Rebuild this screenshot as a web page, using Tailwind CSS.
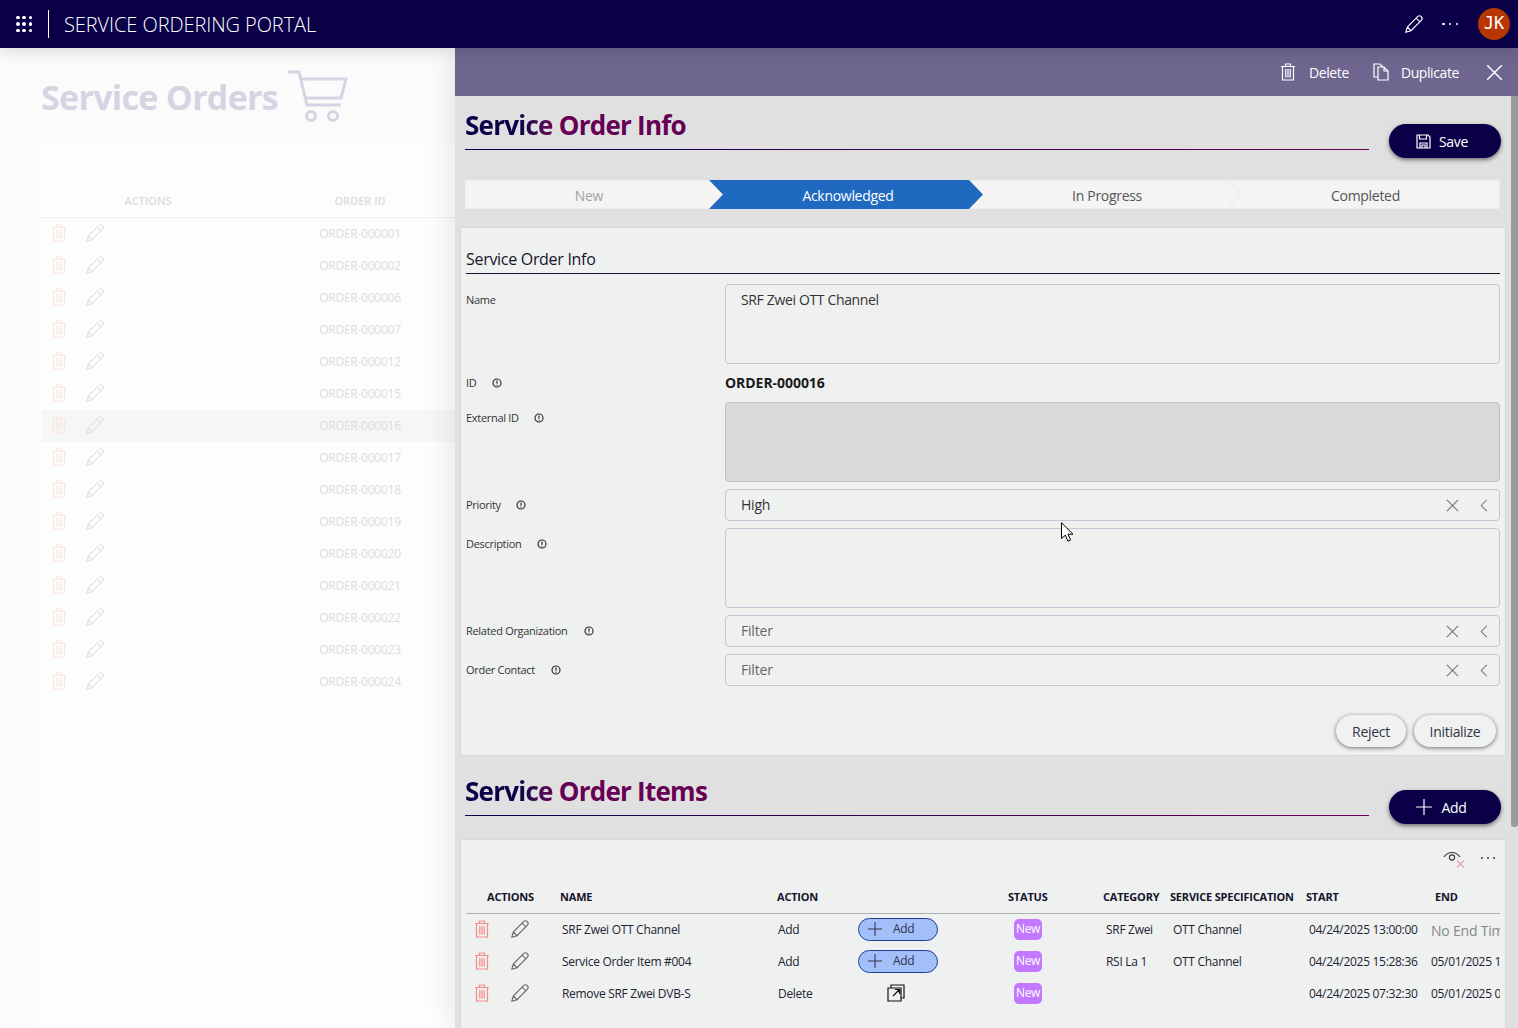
<!DOCTYPE html>
<html lang="en">
<head>
<meta charset="utf-8">
<title>Service Ordering Portal</title>
<script src="https://cdn.jsdelivr.net/npm/@tailwindcss/browser@4"></script>
</head>
<body class="font-['Open_Sans','Noto_Sans',sans-serif]">
<!-- shared icons -->
<svg class="hidden">
    <symbol id="trash" viewBox="0 0 14 18" fill="none" stroke="currentColor" stroke-width="1.2">
        <path d="M0 3.5h14M4.5 3.5V1h5v2.5M1.5 3.5V17h11V3.5M4.8 6v8.5M7 6v8.5M9.2 6v8.5" />
    </symbol>
    <symbol id="pencil" viewBox="0 0 18 18" fill="none" stroke="currentColor" stroke-width="1.1">
        <path d="M.8 17.2l1.5-5.2L12.6 1.7a2 2 0 0 1 3.7 3.7L6 15.7zM2.3 12L6 15.7M11.2 3.1l3.7 3.7M.8 17.2l3-1" />
    </symbol>
    <symbol id="info" viewBox="0 0 10 10" fill="none" stroke="currentColor" stroke-width="1.2">
        <circle cx="5" cy="5" r="4" />
        <path d="M5 2.6v3.2M5 6.8v.9" />
    </symbol>
    <symbol id="close" viewBox="0 0 14 14" fill="none" stroke="currentColor" stroke-width="1.2">
        <path d="M1 1l12 12M13 1L1 13" />
    </symbol>
    <symbol id="chevron" viewBox="0 0 8 14" fill="none" stroke="currentColor" stroke-width="1.1">
        <path d="M7 1L1 7l6 6" />
    </symbol>
    <symbol id="plus" viewBox="0 0 16 16" fill="none" stroke="currentColor" stroke-width="1.2">
        <path d="M8 0v16M0 8h16" />
    </symbol>
</svg>

<div class="relative w-[1518px] h-[1028px] overflow-hidden flex flex-col bg-[#fbfbfb]">
    <header class="relative z-20 h-12 shrink-0 bg-[#0a0048] text-white flex items-center shadow-[0_4px_14px_rgba(0,0,0,0.12)]">
        <div class="w-12 flex justify-center">
            <div class="grid grid-cols-3 gap-[3px] w-[16px]">
                <i class="size-[3.5px] rounded-full bg-white"></i><i class="size-[3.5px] rounded-full bg-white"></i><i class="size-[3.5px] rounded-full bg-white"></i>
                <i class="size-[3.5px] rounded-full bg-white"></i><i class="size-[3.5px] rounded-full bg-white"></i><i class="size-[3.5px] rounded-full bg-white"></i>
                <i class="size-[3.5px] rounded-full bg-white"></i><i class="size-[3.5px] rounded-full bg-white"></i><i class="size-[3.5px] rounded-full bg-white"></i>
            </div>
        </div>
        <div class="w-px h-7 bg-white"></div>
        <h1 class="ml-[15px] pt-[2px] text-[20px] font-light tracking-[-0.08px]">SERVICE ORDERING PORTAL</h1>
        <div class="ml-auto flex items-center">
            <svg class="size-[18px] text-white"><use href="#pencil" /></svg>
            <div class="ml-[19px] w-[16px] flex justify-between">
                <i class="size-[2.5px] bg-white rounded-full"></i><i class="size-[2.5px] bg-white rounded-full"></i><i class="size-[2.5px] bg-white rounded-full"></i>
            </div>
            <div class="ml-[20px] mr-2 size-8 rounded-full bg-[#b83600] flex items-center justify-center font-['DejaVu_Sans_Mono',monospace] text-[17px]">JK</div>
        </div>
    </header>

    <div class="flex flex-1 min-h-0">
        <!-- faded orders list behind the drawer -->
        <aside class="w-[455px] shrink-0 flex flex-col pl-[38px]">
            <div class="h-[96px] shrink-0 flex pl-[3px]">
                <h2 class="mt-[24px] text-[34px] leading-[50px] font-bold tracking-[-0.7px] text-[#d6d4e3]">Service Orders</h2>
                <svg class="ml-[10px] mt-[22px] w-[60px] h-[54px] text-[#d6d4e3]" viewBox="0 0 60 54" fill="none" stroke="currentColor" stroke-width="3">
                    <path d="M0 2h11l8 33h34M13 9h45l-5 19H18" />
                    <circle cx="23" cy="46" r="4.5" /><circle cx="45" cy="46" r="4.5" />
                </svg>
            </div>
            <div class="flex-1 bg-[#fdfdfd] pl-[4px]">
                <div class="h-[74px] flex items-end border-b border-[#eeeeee] text-[11px] font-semibold text-[#dcdcdc] pb-[8px]">
                    <span class="w-[212px] shrink-0 text-center">ACTIONS</span>
                    <span class="w-[212px] shrink-0 text-center">ORDER ID</span>
                </div>
                <div class="text-[12px] tracking-[-0.25px] text-[#dcdcdc]">
                    <div class="h-8 flex items-center"><svg class="ml-[10px] -mt-[2px] w-[14px] h-[18px] text-[#fde3e0]"><use href="#trash" /></svg><svg class="ml-[20px] -mt-[2px] size-[18px] text-[#e2e2e2]"><use href="#pencil" /></svg><span class="ml-[201px] w-[110px] text-center">ORDER-000001</span></div>
                    <div class="h-8 flex items-center"><svg class="ml-[10px] -mt-[2px] w-[14px] h-[18px] text-[#fde3e0]"><use href="#trash" /></svg><svg class="ml-[20px] -mt-[2px] size-[18px] text-[#e2e2e2]"><use href="#pencil" /></svg><span class="ml-[201px] w-[110px] text-center">ORDER-000002</span></div>
                    <div class="h-8 flex items-center"><svg class="ml-[10px] -mt-[2px] w-[14px] h-[18px] text-[#fde3e0]"><use href="#trash" /></svg><svg class="ml-[20px] -mt-[2px] size-[18px] text-[#e2e2e2]"><use href="#pencil" /></svg><span class="ml-[201px] w-[110px] text-center">ORDER-000006</span></div>
                    <div class="h-8 flex items-center"><svg class="ml-[10px] -mt-[2px] w-[14px] h-[18px] text-[#fde3e0]"><use href="#trash" /></svg><svg class="ml-[20px] -mt-[2px] size-[18px] text-[#e2e2e2]"><use href="#pencil" /></svg><span class="ml-[201px] w-[110px] text-center">ORDER-000007</span></div>
                    <div class="h-8 flex items-center"><svg class="ml-[10px] -mt-[2px] w-[14px] h-[18px] text-[#fde3e0]"><use href="#trash" /></svg><svg class="ml-[20px] -mt-[2px] size-[18px] text-[#e2e2e2]"><use href="#pencil" /></svg><span class="ml-[201px] w-[110px] text-center">ORDER-000012</span></div>
                    <div class="h-8 flex items-center"><svg class="ml-[10px] -mt-[2px] w-[14px] h-[18px] text-[#fde3e0]"><use href="#trash" /></svg><svg class="ml-[20px] -mt-[2px] size-[18px] text-[#e2e2e2]"><use href="#pencil" /></svg><span class="ml-[201px] w-[110px] text-center">ORDER-000015</span></div>
                    <div class="h-8 flex items-center bg-[#f6f6f6]"><svg class="ml-[10px] -mt-[2px] w-[14px] h-[18px] text-[#fde3e0]"><use href="#trash" /></svg><svg class="ml-[20px] -mt-[2px] size-[18px] text-[#e2e2e2]"><use href="#pencil" /></svg><span class="ml-[201px] w-[110px] text-center">ORDER-000016</span></div>
                    <div class="h-8 flex items-center"><svg class="ml-[10px] -mt-[2px] w-[14px] h-[18px] text-[#fde3e0]"><use href="#trash" /></svg><svg class="ml-[20px] -mt-[2px] size-[18px] text-[#e2e2e2]"><use href="#pencil" /></svg><span class="ml-[201px] w-[110px] text-center">ORDER-000017</span></div>
                    <div class="h-8 flex items-center"><svg class="ml-[10px] -mt-[2px] w-[14px] h-[18px] text-[#fde3e0]"><use href="#trash" /></svg><svg class="ml-[20px] -mt-[2px] size-[18px] text-[#e2e2e2]"><use href="#pencil" /></svg><span class="ml-[201px] w-[110px] text-center">ORDER-000018</span></div>
                    <div class="h-8 flex items-center"><svg class="ml-[10px] -mt-[2px] w-[14px] h-[18px] text-[#fde3e0]"><use href="#trash" /></svg><svg class="ml-[20px] -mt-[2px] size-[18px] text-[#e2e2e2]"><use href="#pencil" /></svg><span class="ml-[201px] w-[110px] text-center">ORDER-000019</span></div>
                    <div class="h-8 flex items-center"><svg class="ml-[10px] -mt-[2px] w-[14px] h-[18px] text-[#fde3e0]"><use href="#trash" /></svg><svg class="ml-[20px] -mt-[2px] size-[18px] text-[#e2e2e2]"><use href="#pencil" /></svg><span class="ml-[201px] w-[110px] text-center">ORDER-000020</span></div>
                    <div class="h-8 flex items-center"><svg class="ml-[10px] -mt-[2px] w-[14px] h-[18px] text-[#fde3e0]"><use href="#trash" /></svg><svg class="ml-[20px] -mt-[2px] size-[18px] text-[#e2e2e2]"><use href="#pencil" /></svg><span class="ml-[201px] w-[110px] text-center">ORDER-000021</span></div>
                    <div class="h-8 flex items-center"><svg class="ml-[10px] -mt-[2px] w-[14px] h-[18px] text-[#fde3e0]"><use href="#trash" /></svg><svg class="ml-[20px] -mt-[2px] size-[18px] text-[#e2e2e2]"><use href="#pencil" /></svg><span class="ml-[201px] w-[110px] text-center">ORDER-000022</span></div>
                    <div class="h-8 flex items-center"><svg class="ml-[10px] -mt-[2px] w-[14px] h-[18px] text-[#fde3e0]"><use href="#trash" /></svg><svg class="ml-[20px] -mt-[2px] size-[18px] text-[#e2e2e2]"><use href="#pencil" /></svg><span class="ml-[201px] w-[110px] text-center">ORDER-000023</span></div>
                    <div class="h-8 flex items-center"><svg class="ml-[10px] -mt-[2px] w-[14px] h-[18px] text-[#fde3e0]"><use href="#trash" /></svg><svg class="ml-[20px] -mt-[2px] size-[18px] text-[#e2e2e2]"><use href="#pencil" /></svg><span class="ml-[201px] w-[110px] text-center">ORDER-000024</span></div>
                </div>
            </div>
        </aside>

        <!-- order drawer -->
        <main class="relative z-10 flex-1 min-w-0 flex flex-col bg-[#e0e0e0] shadow-[-8px_0_24px_rgba(0,0,0,0.07)]">
            <div class="h-12 shrink-0 bg-[#6e668e] text-white flex items-center justify-end text-[14px] tracking-[-0.4px]">
                <svg class="w-[14px] h-[18px]"><use href="#trash" /></svg>
                <span class="ml-[14px]">Delete</span>
                <svg class="ml-[24px] w-[16px] h-[18px]" viewBox="0 0 16 18" fill="none" stroke="currentColor" stroke-width="1.2">
                    <path d="M5 14H1V1h6l3 3M5 4h6l4 4v9H5zM11 4v4h4" />
                </svg>
                <span class="ml-[12px]">Duplicate</span>
                <svg class="ml-[27px] mr-[15px] size-[17px]"><use href="#close" /></svg>
            </div>

            <div class="flex flex-1 min-h-0">
                <div class="flex-1 min-w-0 pl-[5px]">
                    <section class="h-[54px] pl-[5px] pr-[10px] flex items-start">
                        <h2 class="flex-1 h-[54px] pt-[10px] text-[26px] leading-[38px] font-bold tracking-[-0.75px] border-b border-transparent [border-image:linear-gradient(to_right,#0a0048,#660055)_1]">
                            <span class="bg-linear-to-r from-[#0a0048] from-60% to-[#660055] bg-clip-text text-transparent">Service</span>
                            <span class="text-[#660055]">Order Info</span>
                        </h2>
                        <button class="ml-[20px] mt-[28px] w-[112px] h-[34px] shrink-0 rounded-full bg-[#0a0048] text-white text-[14px] tracking-[-0.3px] flex items-center justify-center gap-[8px] pr-[6px] shadow-[0_2px_4px_rgba(0,0,0,0.5)]">
                            <svg class="size-[15px]" viewBox="0 0 15 15" fill="none" stroke="currentColor" stroke-width="1.2">
                                <path d="M1 1h11l2 2v11H1zM3.5 1v4h7V1M4 14V9h7v5M6 14v-3h3v3" />
                            </svg>
                            Save
                        </button>
                    </section>

                    <!-- status stepper -->
                    <div class="ml-[5px] mt-[30px] w-[1035px] h-[29px] flex bg-[#f4f4f4] border border-[#efefef] rounded-[2px] text-[14px] tracking-[-0.3px]">
                        <div class="w-[258px] -ml-px pt-[2px] flex items-center justify-center pr-[10px] text-[#a3a3a3]">New</div>
                        <div class="-ml-[14px] -my-px pt-[2px] w-[274px] flex items-center justify-center pl-[4px] text-white bg-[#1f69c1] [clip-path:polygon(0_0,94.9%_0,100%_50%,94.9%_100%,0_100%,5.1%_50%)]">Acknowledged</div>
                        <div class="-ml-[14px] pt-[2px] w-[273px] flex items-center justify-center pl-[3px] text-[#555555]">In Progress</div>
                        <svg class="-ml-[15px] w-[15px] h-[27px] text-[#e6e6e6]" viewBox="0 0 15 27" fill="none" stroke="currentColor"><path d="M1 0l13 13.5L1 27" /></svg>
                        <div class="flex-1 pt-[2px] flex items-center justify-center text-[#555555] pr-[10px]">Completed</div>
                    </div>

                    <section class="mt-[18px] w-[1046px] h-[529px] bg-[#eff1f0] border border-[#d9d9d9] px-[5px]">
                        <h3 class="mt-[19px] h-[27px] text-[16px] leading-[24px] font-medium tracking-[-0.3px] text-[#14142b] border-b border-[#14142b]">Service Order Info</h3>
                        <div class="mt-[10px] flex flex-col gap-[7px] text-[11px] tracking-[-0.3px] text-[#333333]">
                            <div class="flex">
                                <div class="w-[259px] h-8 flex items-center">Name</div>
                                <div class="flex-1 h-20 rounded-[4px] border border-[#c5c5d5] px-[15px] pt-[5px] text-[14px] leading-[20px] tracking-[-0.35px]">SRF Zwei OTT Channel</div>
                            </div>
                            <div class="flex items-center h-6">
                                <div class="w-[259px] flex items-center">ID<svg class="ml-[16px] size-[10px]"><use href="#info" /></svg></div>
                                <div class="text-[14px] font-bold tracking-[-0.05px] text-[#1a1a1a] -mt-[1px]">ORDER-000016</div>
                            </div>
                            <div class="flex">
                                <div class="w-[259px] h-8 flex items-center">External ID<svg class="ml-[15px] size-[10px]"><use href="#info" /></svg></div>
                                <div class="flex-1 h-20 rounded-[4px] border border-[#c0c0c8] bg-[#d8d9d8]"></div>
                            </div>
                            <div class="flex">
                                <div class="w-[259px] h-8 flex items-center">Priority<svg class="ml-[15px] size-[10px]"><use href="#info" /></svg></div>
                                <div class="flex-1 h-8 rounded-[4px] border border-[#c5c5d5] pl-[15px] pr-[11px] flex items-center text-[14px] tracking-[-0.2px]"><span class="pb-[2px]">High</span>
                                    <svg class="ml-auto size-[13px] text-[#777777]"><use href="#close" /></svg>
                                    <svg class="ml-[21px] w-[8px] h-[13px] text-[#777777]"><use href="#chevron" /></svg>
                                </div>
                            </div>
                            <div class="flex">
                                <div class="w-[259px] h-8 flex items-center">Description<svg class="ml-[16px] size-[10px]"><use href="#info" /></svg></div>
                                <div class="flex-1 h-20 rounded-[4px] border border-[#c5c5d5]"></div>
                            </div>
                            <div class="flex">
                                <div class="w-[259px] h-8 flex items-center">Related Organization<svg class="ml-[16px] size-[10px]"><use href="#info" /></svg></div>
                                <div class="flex-1 h-8 rounded-[4px] border border-[#c5c5d5] pl-[15px] pr-[11px] flex items-center text-[14px] tracking-[-0.2px] text-[#666666]"><span class="pb-[2px]">Filter</span>
                                    <svg class="ml-auto size-[13px] text-[#777777]"><use href="#close" /></svg>
                                    <svg class="ml-[21px] w-[8px] h-[13px] text-[#777777]"><use href="#chevron" /></svg>
                                </div>
                            </div>
                            <div class="flex">
                                <div class="w-[259px] h-8 flex items-center">Order Contact<svg class="ml-[16px] size-[10px]"><use href="#info" /></svg></div>
                                <div class="flex-1 h-8 rounded-[4px] border border-[#c5c5d5] pl-[15px] pr-[11px] flex items-center text-[14px] tracking-[-0.2px] text-[#666666]"><span class="pb-[2px]">Filter</span>
                                    <svg class="ml-auto size-[13px] text-[#777777]"><use href="#close" /></svg>
                                    <svg class="ml-[21px] w-[8px] h-[13px] text-[#777777]"><use href="#chevron" /></svg>
                                </div>
                            </div>
                        </div>
                        <div class="mt-[29px] mr-[4px] flex justify-end gap-[8px] text-[14px] tracking-[-0.3px] text-[#333344]">
                            <button class="w-[70px] h-8 rounded-full bg-[#f0f2f1] shadow-[0_1px_4px_rgba(0,0,0,0.55)]">Reject</button>
                            <button class="w-[82px] h-8 rounded-full bg-[#f0f2f1] shadow-[0_1px_4px_rgba(0,0,0,0.55)]">Initialize</button>
                        </div>
                    </section>

                    <section class="mt-[6px] h-[54px] pl-[5px] pr-[10px] flex items-start">
                        <h2 class="flex-1 h-[54px] pt-[10px] text-[26px] leading-[38px] font-bold tracking-[-0.75px] border-b border-transparent [border-image:linear-gradient(to_right,#0a0048,#660055)_1]">
                            <span class="bg-linear-to-r from-[#0a0048] from-60% to-[#660055] bg-clip-text text-transparent">Service</span>
                            <span class="text-[#660055]">Order Items</span>
                        </h2>
                        <button class="ml-[20px] mt-[28px] w-[112px] h-[34px] shrink-0 rounded-full bg-[#0a0048] text-white text-[14px] tracking-[-0.3px] flex items-center justify-center gap-[9px] pr-[7px] shadow-[0_2px_4px_rgba(0,0,0,0.5)]">
                            <svg class="size-4"><use href="#plus" /></svg>
                            Add
                        </button>
                    </section>

                    <section class="mt-[23px] w-[1046px] h-[200px] bg-[#eff1f0] border border-[#d9d9d9] pl-[5px] pr-[5px] overflow-hidden">
                        <div class="h-[41px] pt-[9px] flex items-start justify-end">
                            <svg class="w-[24px] h-[20px]" viewBox="0 0 24 20" fill="none">
                                <path d="M1 8C5 2 13 2 17 8" stroke="#333344" stroke-width="1.1" />
                                <circle cx="9" cy="8.5" r="2.6" stroke="#333344" stroke-width="1.1" />
                                <path d="M14 11.5l7 7M21 11.5l-7 7" stroke="#f29aa8" stroke-width="1.1" />
                            </svg>
                            <div class="ml-[14px] mt-[8px] mr-[5px] w-[14px] flex justify-between">
                                <i class="size-[2px] bg-[#333344] rounded-full"></i><i class="size-[2px] bg-[#333344] rounded-full"></i><i class="size-[2px] bg-[#333344] rounded-full"></i>
                            </div>
                        </div>
                        <table class="table-fixed w-[1034px] border-collapse text-left text-[12px] tracking-[-0.3px] text-[#222233]">
                            <colgroup>
                                <col class="w-[91px]"><col class="w-[217px]"><col class="w-[81px]"><col class="w-[148px]"><col class="w-[97px]"><col class="w-[67px]"><col class="w-[136px]"><col class="w-[125px]"><col class="w-[72px]">
                            </colgroup>
                            <thead>
                                <tr class="h-[32px] text-[11px] text-[#14142b] border-b border-[#b0b0b0]">
                                    <th class="pl-[21px] font-bold tracking-[-0.2px]">ACTIONS</th>
                                    <th class="pl-[3px] font-bold tracking-[-0.2px]">NAME</th>
                                    <th class="pl-[3px] font-bold tracking-[-0.2px]">ACTION</th>
                                    <th></th>
                                    <th class="pl-[5px] font-bold tracking-[-0.2px]">STATUS</th>
                                    <th class="pl-[3px] font-bold tracking-[-0.2px] whitespace-nowrap">CATEGORY</th>
                                    <th class="pl-[3px] font-bold tracking-[-0.2px] whitespace-nowrap">SERVICE SPECIFICATION</th>
                                    <th class="pl-[3px] font-bold tracking-[-0.2px]">START</th>
                                    <th class="pl-[7px] font-bold tracking-[-0.2px]">END</th>
                                </tr>
                            </thead>
                            <tbody>
                                <tr class="h-8 border-b border-[#edefee] [&>td]:pt-[2px]">
                                    <td class="!pt-0"><div class="flex items-center pl-[9px]"><svg class="w-[14px] h-[18px] text-[#f58a85]"><use href="#trash" /></svg><svg class="ml-[22px] size-[18px] text-[#666666]"><use href="#pencil" /></svg></div></td>
                                    <td class="pl-[5px]">SRF Zwei OTT Channel</td>
                                    <td class="pl-[4px]">Add</td>
                                    <td class="!pt-0"><button class="ml-[3px] w-[80px] h-[23px] rounded-full bg-[#a3bffa] border border-[#1f3f94] text-[#333344] flex items-center pl-[9px] gap-[11px]"><svg class="size-[14px]"><use href="#plus" /></svg>Add</button></td>
                                    <td class="pl-[11px] !pt-0"><span class="inline-flex w-[28px] h-[21px] items-center justify-center rounded-[5px] bg-[#c278ff] text-white">New</span></td>
                                    <td class="pl-[6px]">SRF Zwei</td>
                                    <td class="pl-[6px]">OTT Channel</td>
                                    <td class="pl-[6px]">04/24/2025 13:00:00</td>
                                    <td class="pl-[3px] text-[14px] text-[#888888] whitespace-nowrap overflow-hidden tracking-[-0.2px]">No End Time</td>
                                </tr>
                                <tr class="h-8 border-b border-[#edefee] [&>td]:pt-[2px]">
                                    <td class="!pt-0"><div class="flex items-center pl-[9px]"><svg class="w-[14px] h-[18px] text-[#f58a85]"><use href="#trash" /></svg><svg class="ml-[22px] size-[18px] text-[#666666]"><use href="#pencil" /></svg></div></td>
                                    <td class="pl-[5px]">Service Order Item #004</td>
                                    <td class="pl-[4px]">Add</td>
                                    <td class="!pt-0"><button class="ml-[3px] w-[80px] h-[23px] rounded-full bg-[#a3bffa] border border-[#1f3f94] text-[#333344] flex items-center pl-[9px] gap-[11px]"><svg class="size-[14px]"><use href="#plus" /></svg>Add</button></td>
                                    <td class="pl-[11px] !pt-0"><span class="inline-flex w-[28px] h-[21px] items-center justify-center rounded-[5px] bg-[#c278ff] text-white">New</span></td>
                                    <td class="pl-[6px]">RSI La 1</td>
                                    <td class="pl-[6px]">OTT Channel</td>
                                    <td class="pl-[6px]">04/24/2025 15:28:36</td>
                                    <td class="pl-[3px] whitespace-nowrap overflow-hidden">05/01/2025 15:28:36</td>
                                </tr>
                                <tr class="h-8 border-b border-[#edefee] [&>td]:pt-[2px]">
                                    <td class="!pt-0"><div class="flex items-center pl-[9px]"><svg class="w-[14px] h-[18px] text-[#f58a85]"><use href="#trash" /></svg><svg class="ml-[22px] size-[18px] text-[#666666]"><use href="#pencil" /></svg></div></td>
                                    <td class="pl-[5px]">Remove SRF Zwei DVB-S</td>
                                    <td class="pl-[4px]">Delete</td>
                                    <td class="!pt-0"><svg class="ml-[32px] size-[18px] text-[#111111]" viewBox="0 0 18 18" fill="none" stroke="currentColor" stroke-width="1.2"><path d="M4 4V1h13v13h-3M1 4h13v13H1zM6 12l6-6M8 5.5h4.5V10" /></svg></td>
                                    <td class="pl-[11px] !pt-0"><span class="inline-flex w-[28px] h-[21px] items-center justify-center rounded-[5px] bg-[#c278ff] text-white">New</span></td>
                                    <td></td>
                                    <td></td>
                                    <td class="pl-[6px]">04/24/2025 07:32:30</td>
                                    <td class="pl-[3px] whitespace-nowrap overflow-hidden">05/01/2025 07:32:30</td>
                                </tr>
                            </tbody>
                        </table>
                    </section>
                </div>

                <!-- page scrollbar -->
                <div class="w-[7px] shrink-0">
                    <div class="h-[731px] bg-[#9b9b9b] rounded-b-[3px]"></div>
                </div>
            </div>
        </main>
    </div>

    <!-- mouse pointer from the capture -->
    <svg class="absolute left-[1061px] top-[522px] w-[13px] h-[20px] z-30" viewBox="0 0 13 20">
        <path d="M.5.8v15.7l3.8-3.3 2.6 6 2.7-1.2-2.6-5.8h5z" fill="#fff" stroke="#000" />
    </svg>
</div>
</body>
</html>
